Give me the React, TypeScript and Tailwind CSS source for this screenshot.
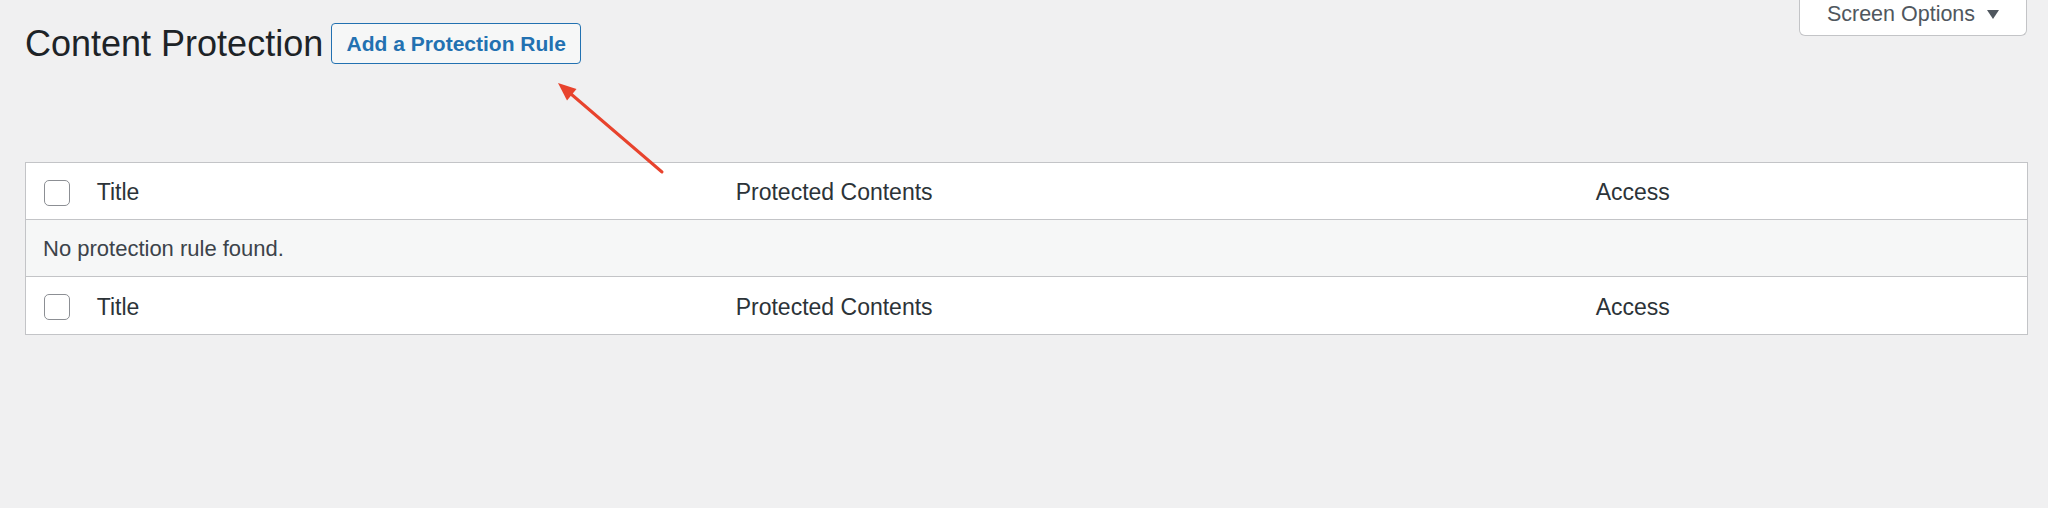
import React from "react";

function Checkbox() {
  return (
    <span className="block w-[26px] h-[26px] rounded-[5px] border-[1.5px] border-[#8c8f94] bg-white" />
  );
}

function HeadRow({ border }: { border?: boolean }) {
  return (
    <div
      className={`flex items-center h-[57px] pt-[3px] text-[23px] text-[#2c3338] ${border ? "border-b border-[#c3c4c7]" : ""}`}
    >
      <div className="w-[70.7px] pl-[17.7px] shrink-0 flex items-center">
        <Checkbox />
      </div>
      <div className="w-[639px] shrink-0">Title</div>
      <div className="w-[860px] shrink-0">Protected Contents</div>
      <div className="flex-1">Access</div>
    </div>
  );
}

export default function App() {
  return (
    <div className="relative w-full h-[508px] bg-[#f0f0f1] font-['Liberation_Sans',Arial,sans-serif] overflow-hidden">
      <div className="flex justify-between items-start">
        <div className="flex items-start pt-[23px] pl-[25px]">
          <h1 className="text-[36px] leading-[41px] font-normal text-[#1d2327]">Content Protection</h1>
          <button className="ml-[8px] w-[250px] h-[41px] border border-[#2271b1] rounded-[4px] bg-[#f6f7f7] text-[#2271b1] font-bold text-[21px] leading-[39px] text-center">
            Add a Protection Rule
          </button>
        </div>
        <div className="mr-[21px] w-[228px] h-[36px] bg-white border border-t-0 border-[#c3c4c7] rounded-b-[6px] flex justify-center items-start pt-[2px]">
          <span className="text-[21.5px] leading-[24px] text-[#50575e]">Screen Options</span>
          <svg width="12" height="10" viewBox="0 0 12 10" className="ml-[12px] mt-[8px]">
            <polygon points="0,0 12,0 6,9" fill="#50575e" />
          </svg>
        </div>
      </div>

      <div className="mt-[98px] ml-[25px] mr-[20px] border border-[#c3c4c7] bg-white">
        <HeadRow border />
        <div className="h-[57px] flex items-center bg-[#f6f7f7] border-b border-[#c3c4c7] pl-[17px] text-[22px] text-[#3c434a]">
          No protection rule found.
        </div>
        <HeadRow />
      </div>

      <svg className="absolute left-0 top-0 z-10 pointer-events-none" width="2048" height="508">
        <line x1="571" y1="94" x2="662" y2="172" stroke="#e8432d" strokeWidth="3" strokeLinecap="round" />
        <polygon points="558,83 567,100.5 576.5,89" fill="#e8432d" />
      </svg>
    </div>
  );
}
